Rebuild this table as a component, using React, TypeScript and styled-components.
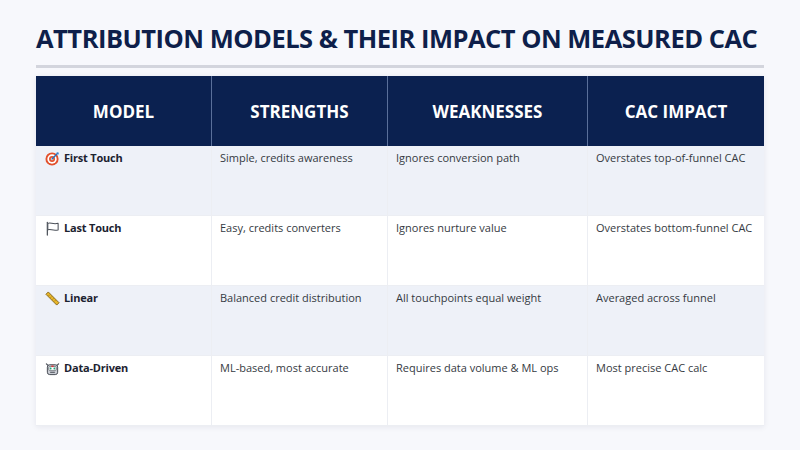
import React from 'react';
import styled, { createGlobalStyle } from 'styled-components';

const GlobalStyle = createGlobalStyle`
  html, body {
    margin: 0;
    padding: 0;
    background: #f7f8fc;
  }
  body {
    font-family: "Open Sans", "Noto Sans", sans-serif;
  }
`;

const Page = styled.div`
  width: 800px;
  height: 450px;
  box-sizing: border-box;
  padding: 22px 36px 0 36px;
  background: #f7f8fc;
`;

const Title = styled.h1`
  margin: 0;
  font-family: "Open Sans", sans-serif;
  font-size: 25.5px;
  font-weight: 700;
  letter-spacing: -0.5px;
  line-height: 32px;
  color: #0e1f4a;
  white-space: nowrap;
`;

const Rule = styled.div`
  height: 3px;
  margin-top: 11px;
  background: #d3d5dd;
`;

const Table = styled.div`
  margin-top: 8px;
  display: grid;
  grid-template-columns: 176px 176px 200px 176px;
  grid-auto-rows: 70px;
  background: #ffffff;
  box-shadow: 0 1px 6px rgba(20, 30, 70, 0.08);
`;

const HeadCell = styled.div<{ $last?: boolean }>`
  display: flex;
  align-items: center;
  justify-content: center;
  background: #0b2150;
  color: #ffffff;
  font-family: "Open Sans", sans-serif;
  font-weight: 700;
  font-size: 17px;
  border-right: ${(p) => (p.$last ? 'none' : '1px solid #5a6f9a')};
  box-sizing: border-box;
`;

const Cell = styled.div<{ $shade: boolean; $last?: boolean }>`
  box-sizing: border-box;
  padding: 4px 8px;
  background: ${(p) => (p.$shade ? '#eef1f8' : '#ffffff')};
  border-right: ${(p) => (p.$last ? 'none' : '1px solid #eceef3')};
  border-bottom: 1px solid #eceef3;
  font-family: "Open Sans", sans-serif;
  font-size: 11px;
  line-height: 16px;
  color: #353a42;
`;

const ModelName = styled.div`
  display: flex;
  align-items: center;
  gap: 4px;
  padding-left: 1px;
  font-weight: 700;
  letter-spacing: -0.2px;
  color: #1c2230;
`;

const IconBox = styled.span`
  display: inline-flex;
  width: 15px;
  height: 15px;
  flex: none;
`;

const TargetIcon = () => (
  <svg width="15" height="15" viewBox="0 0 16 16">
    <circle cx="7.5" cy="8.5" r="7" fill="#e2502c" />
    <circle cx="7.5" cy="8.5" r="5" fill="#ffffff" />
    <circle cx="7.5" cy="8.5" r="3.2" fill="#e2502c" />
    <circle cx="7.5" cy="8.5" r="1.4" fill="#ffffff" />
    <path d="M7.5 8.5 L13.5 2.5" stroke="#2a6fb8" strokeWidth="1.6" strokeLinecap="round" />
    <path d="M12 1.5 L14.5 1.5 L14.5 4 Z" fill="#3b8ad6" />
  </svg>
);

const FlagIcon = () => (
  <svg width="15" height="15" viewBox="0 0 16 16">
    <path d="M2.5 1.5 V15" stroke="#4a4f58" strokeWidth="1.3" strokeLinecap="round" />
    <path
      d="M3 2.5 C6 1 8 4 14 2.5 V9.5 C8 11 6 8 3 9.5 Z"
      fill="#ffffff"
      stroke="#4a4f58"
      strokeWidth="1.1"
      strokeLinejoin="round"
    />
  </svg>
);

const RulerIcon = () => (
  <svg width="15" height="15" viewBox="0 0 16 16">
    <path d="M1 3.5 L3.5 1 L15 12.5 L12.5 15 Z" fill="#e8b62a" stroke="#7a5a10" strokeWidth="0.9" strokeLinejoin="round" />
    <path d="M4 5 L5 4 M6 7 L7 6 M8 9 L9 8 M10 11 L11 10" stroke="#7a5a10" strokeWidth="0.8" />
  </svg>
);

const RobotIcon = () => (
  <svg width="15" height="15" viewBox="0 0 16 16">
    <path d="M1.5 3 L3.5 5 M14.5 3 L12.5 5" stroke="#4a4f58" strokeWidth="1.3" strokeLinecap="round" />
    <rect x="2.5" y="4" width="11" height="10.5" rx="2.5" fill="#c9ccd3" stroke="#3e434c" strokeWidth="1" />
    <rect x="4" y="6" width="8" height="4" rx="1" fill="#ffffff" stroke="#3e434c" strokeWidth="0.6" />
    <circle cx="6" cy="8" r="1" fill="#1fa67a" />
    <circle cx="10" cy="8" r="1" fill="#1fa67a" />
    <rect x="6.8" y="4.8" width="2.4" height="1.6" fill="#d93a3a" />
    <path d="M5.5 12 H10.5" stroke="#3e434c" strokeWidth="1" />
  </svg>
);

type Row = {
  icon: React.ReactNode;
  model: string;
  strengths: string;
  weaknesses: string;
  impact: string;
};

const rows: Row[] = [
  {
    icon: <TargetIcon />,
    model: 'First Touch',
    strengths: 'Simple, credits awareness',
    weaknesses: 'Ignores conversion path',
    impact: 'Overstates top-of-funnel CAC',
  },
  {
    icon: <FlagIcon />,
    model: 'Last Touch',
    strengths: 'Easy, credits converters',
    weaknesses: 'Ignores nurture value',
    impact: 'Overstates bottom-funnel CAC',
  },
  {
    icon: <RulerIcon />,
    model: 'Linear',
    strengths: 'Balanced credit distribution',
    weaknesses: 'All touchpoints equal weight',
    impact: 'Averaged across funnel',
  },
  {
    icon: <RobotIcon />,
    model: 'Data-Driven',
    strengths: 'ML-based, most accurate',
    weaknesses: 'Requires data volume & ML ops',
    impact: 'Most precise CAC calc',
  },
];

const headers = ['MODEL', 'STRENGTHS', 'WEAKNESSES', 'CAC IMPACT'];

export default function App() {
  return (
    <Page>
      <GlobalStyle />
      <Title>ATTRIBUTION MODELS &amp; THEIR IMPACT ON MEASURED CAC</Title>
      <Rule />
      <Table>
        {headers.map((h, i) => (
          <HeadCell key={h} $last={i === headers.length - 1}>
            {h}
          </HeadCell>
        ))}
        {rows.map((row, index) => {
          const shade = index % 2 === 0;
          return (
            <React.Fragment key={row.model}>
              <Cell $shade={shade}>
                <ModelName>
                  <IconBox>{row.icon}</IconBox>
                  {row.model}
                </ModelName>
              </Cell>
              <Cell $shade={shade}>{row.strengths}</Cell>
              <Cell $shade={shade}>{row.weaknesses}</Cell>
              <Cell $shade={shade} $last>
                {row.impact}
              </Cell>
            </React.Fragment>
          );
        })}
      </Table>
    </Page>
  );
}
